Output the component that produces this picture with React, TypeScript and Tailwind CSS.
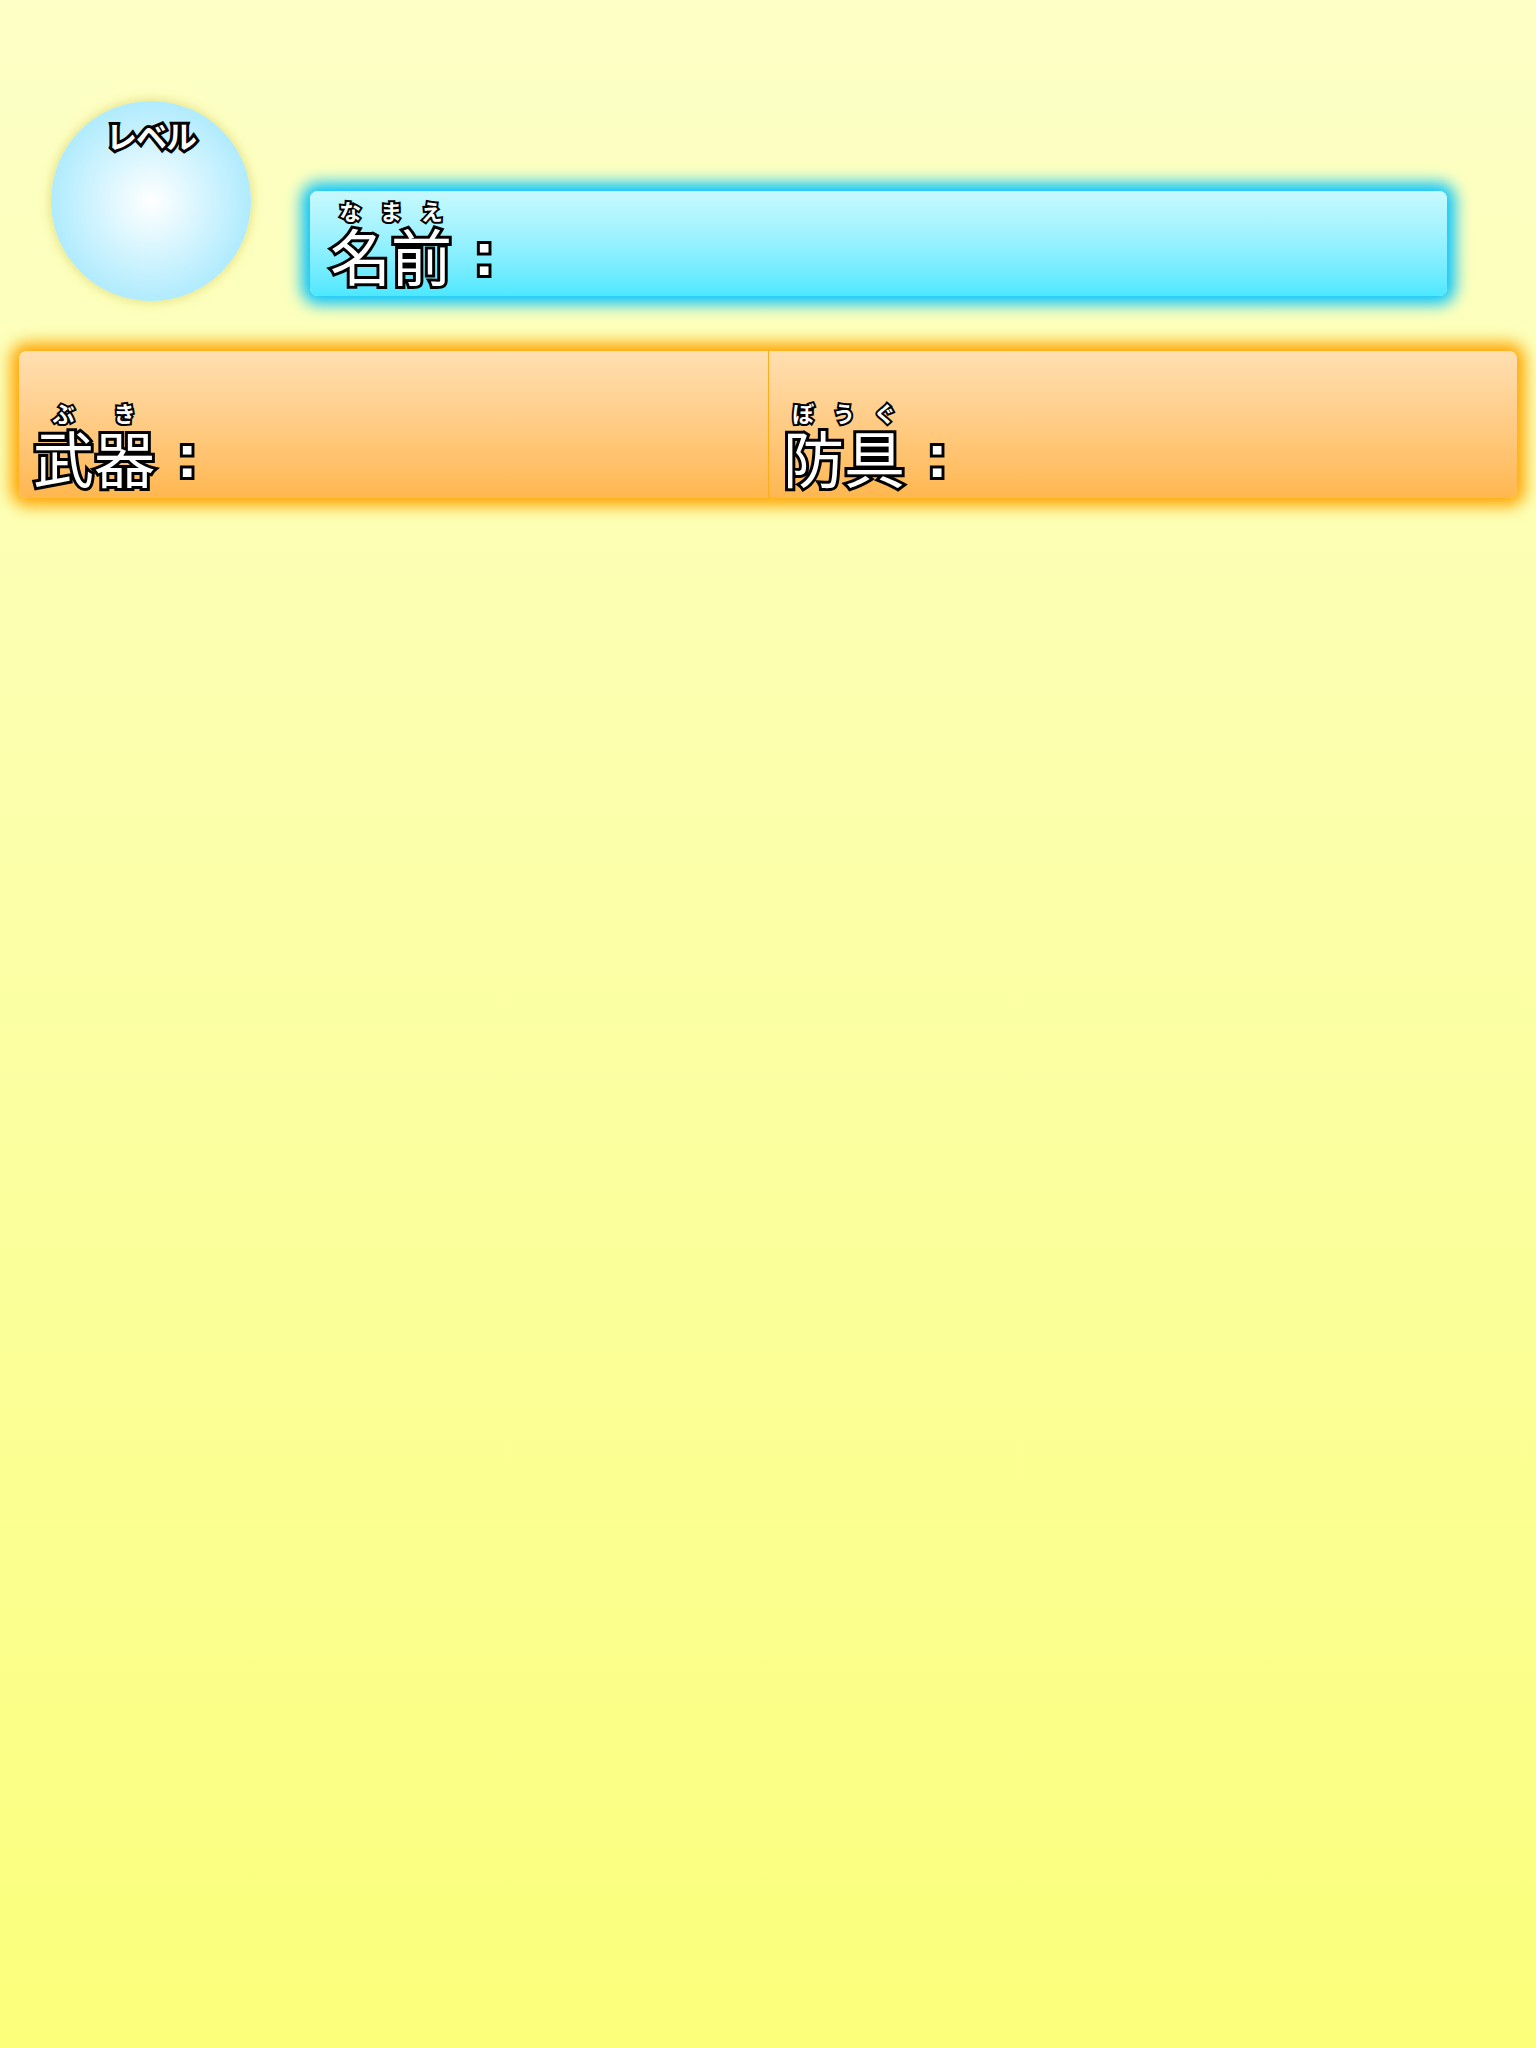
const outline =
    "text-white [-webkit-text-stroke:6px_#000] [paint-order:stroke_fill]";
const rubyOutline =
    "text-white [-webkit-text-stroke:4px_#000] [paint-order:stroke_fill]";

// base text with its reading on top, spread like ruby-align: space-around
const Label = ({base, kana}: {base: string; kana: string}) => {
    return (
        <div className="flex items-end">
            <div className="flex flex-col">
                <div className={`flex justify-around text-[22px] leading-none font-bold mb-[3px] ${rubyOutline}`}>
                    {kana.split("").map((k, i) => (
                        <span key={i}>{k}</span>
                    ))}
                </div>
                <span className={`text-[61px] leading-none ${outline}`}>{base}</span>
            </div>
            <span className={`ml-[22px] text-[61px] leading-none font-['Liberation_Sans',sans-serif] font-bold ${outline}`}>:</span>
        </div>
    );
};

const App = () => {
    return (
        <div className="min-h-[2048px] w-full bg-gradient-to-b from-[#fdffc6] to-[#fbff7a] font-['Noto_Sans_CJK_JP','Noto_Sans',sans-serif]">
            <div className="flex pl-[51px] pt-[101px]">
                <div className="w-[200px] h-[200px] shrink-0 rounded-full bg-[radial-gradient(circle,_#ffffff_0%,_#8fe3fd_100%)] shadow-[0_0_10px_2px_rgba(214,200,90,0.5)] flex justify-center pt-[12px]">
                    <span className={`text-[31px] font-bold leading-[1.4] tracking-[-1px] ${outline}`}>レベル</span>
                </div>
                <div className="ml-[59px] mt-[90px] w-[1137px] h-[105px] rounded-lg bg-gradient-to-b from-[#c8f9fe] to-[#4ce8ff] shadow-[0_0_16px_8px_#00c3ff] flex items-end pl-[20px] pb-[11px]">
                    <Label base="名前" kana="なまえ" />
                </div>
            </div>
            <div className="mx-[19px] mt-[50px] h-[147px] rounded-lg bg-gradient-to-b from-[#ffdfb1] to-[#ffb74e] shadow-[0_0_16px_8px_#ffa500] grid grid-cols-2">
                <div className="flex items-end pl-[14px] pb-[11px]">
                    <Label base="武器" kana="ぶき" />
                </div>
                <div className="flex items-end pl-[14px] pb-[11px] border-l border-[#ffab1a]">
                    <Label base="防具" kana="ぼうぐ" />
                </div>
            </div>
        </div>
    );
};

export default App
